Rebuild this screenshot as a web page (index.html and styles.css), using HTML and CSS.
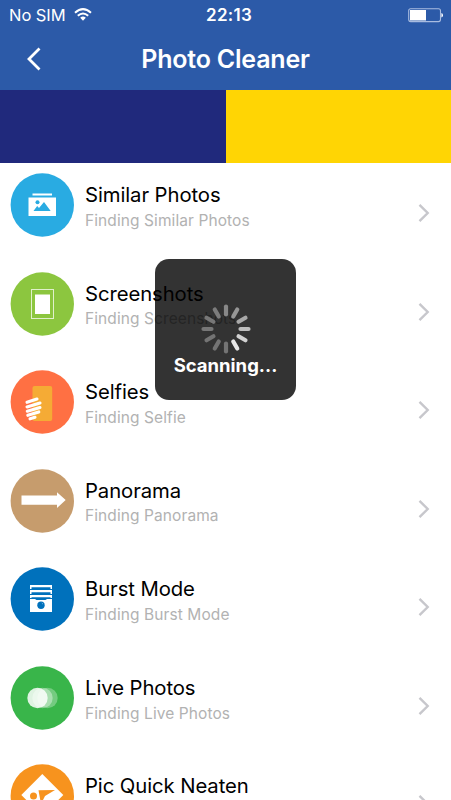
FILE: index.html
```html
<!DOCTYPE html>
<html lang="en">
<head>
<meta charset="utf-8">
<title>Photo Cleaner</title>
<link rel="stylesheet" href="styles.css">
</head>
<body>
<div class="screen">
  <header class="header">
    <div class="status">
      <div class="carrier"><span>No SIM</span>
        <svg class="wifi" width="18" height="14" viewBox="0 0 18 14" fill="none" stroke="#fff" stroke-width="2"><path d="M1 4.7Q9-2.5 17 4.7"/><path d="M3.8 7.8Q9 3.2 14.2 7.8"/><path d="M6.2 9.8Q9 7.4 11.8 9.8L9 12.8Z" fill="#fff" stroke="none"/></svg>
      </div>
      <span class="time">22:13</span>
      <svg class="battery" width="36" height="15" viewBox="0 0 36 15"><rect x=".7" y=".8" width="31.8" height="12.8" rx="2" fill="none" stroke="#a9bce0" stroke-width="1.1"/><path d="M2 2H18V12.5H2Z" fill="#fff"/><path d="M33.4 5Q35 5.2 35 7.2T33.4 9.5Z" fill="#fff"/></svg>
    </div>
    <div class="nav">
      <svg class="back" width="16" height="24" viewBox="0 0 16 24" fill="none" stroke="#fff" stroke-width="2.8"><path d="M13.5 1.5L3 12L13.5 22.5"/></svg>
      <h1>Photo Cleaner</h1>
    </div>
  </header>
  <div class="usage"><div class="used"></div><div class="free"></div></div>
  <main class="list">
    <div class="row">
      <svg class="icon" viewBox="0 0 64 64"><circle cx="32.3" cy="32" r="31.7" fill="#29abe2"/><path fill="#fff" d="M22.5 20.5H42V22.5H22.5ZM18.5 24.5H46V43H18.5Z"/><circle cx="27.5" cy="29.3" r="2" fill="#29abe2"/><path d="M23.5 38L27.2 33L29 35L34 29L40.7 38Z" fill="#29abe2"/></svg>
      <div class="text"><h2>Similar Photos</h2><p>Finding Similar Photos</p></div>
      <svg class="chevron" viewBox="0 0 12 20"><path d="M1.5 1.8L9.7 10L1.5 18.2"/></svg>
    </div>
    <div class="row">
      <svg class="icon" viewBox="0 0 64 64"><circle cx="32.3" cy="32" r="31.7" fill="#8cc63f"/><rect x="21.5" y="17.5" width="22" height="29" fill="none" stroke="#e0f0cb" stroke-width="1"/><path d="M25 22.5H40V42H25Z" fill="#fff"/></svg>
      <div class="text"><h2>Screenshots</h2><p>Finding Screenshots</p></div>
      <svg class="chevron" viewBox="0 0 12 20"><path d="M1.5 1.8L9.7 10L1.5 18.2"/></svg>
    </div>
    <div class="row">
      <svg class="icon" viewBox="0 0 64 64"><circle cx="32.3" cy="32" r="31.7" fill="#ff7043"/><rect x="22.5" y="16" width="19.7" height="35" rx="2" fill="#f5ab35"/><g stroke="#fff" stroke-width="3.1" stroke-linecap="round"><path d="M17 32.3L27 29M17 36.9L30 33M17.3 41.2L30 37.5M17.8 45.3L28.8 41.9M20 48.8L25 47.3"/></g></svg>
      <div class="text"><h2>Selfies</h2><p>Finding Selfie</p></div>
      <svg class="chevron" viewBox="0 0 12 20"><path d="M1.5 1.8L9.7 10L1.5 18.2"/></svg>
    </div>
    <div class="row">
      <svg class="icon" viewBox="0 0 64 64"><circle cx="32.3" cy="32" r="31.7" fill="#c69c6d"/><path d="M11.5 26.4H47V23.3L55.7 31L47 39V35.8H11.5Z" fill="#fff"/></svg>
      <div class="text"><h2>Panorama</h2><p>Finding Panorama</p></div>
      <svg class="chevron" viewBox="0 0 12 20"><path d="M1.5 1.8L9.7 10L1.5 18.2"/></svg>
    </div>
    <div class="row">
      <svg class="icon" viewBox="0 0 64 64"><circle cx="32.3" cy="32" r="31.7" fill="#0071bc"/><path d="M20 18H42V22H40.5V20.2H21.5V22H20ZM20 23H42V27H40.5V25.2H21.5V27H20ZM20 28H42V31H40.5V30.2H21.5V31H20ZM20 32H25L26.5 33H35.5L37 32H42V45H20Z" fill="#fff"/><circle cx="31" cy="38.2" r="3.7" fill="#0071bc"/><path d="M31.8 36L33 37.2" stroke="#78b3dc"/></svg>
      <div class="text"><h2>Burst Mode</h2><p>Finding Burst Mode</p></div>
      <svg class="chevron" viewBox="0 0 12 20"><path d="M1.5 1.8L9.7 10L1.5 18.2"/></svg>
    </div>
    <div class="row">
      <svg class="icon" viewBox="0 0 64 64"><circle cx="32.3" cy="32" r="31.7" fill="#39b54a"/><g fill="#fff"><circle cx="37.5" cy="32" r="10.2" opacity=".3"/><circle cx="32.5" cy="32" r="10.2" opacity=".38"/><circle cx="27.5" cy="32" r="10.2" opacity=".84"/></g></svg>
      <div class="text"><h2>Live Photos</h2><p>Finding Live Photos</p></div>
      <svg class="chevron" viewBox="0 0 12 20"><path d="M1.5 1.8L9.7 10L1.5 18.2"/></svg>
    </div>
    <div class="row">
      <svg class="icon" viewBox="0 0 64 64"><circle cx="32.3" cy="32" r="31.7" fill="#f7931e"/><path d="M32.3 10L53.3 31L32.3 52L11.3 31Z" fill="#fff"/><circle cx="23.5" cy="32" r="3.5" fill="#f7931e"/><path d="M28.5 26.2L45 26L35 32L31 40Z" fill="#f7931e"/></svg>
      <div class="text"><h2>Pic Quick Neaten</h2></div>
      <svg class="chevron" viewBox="0 0 12 20"><path d="M1.5 1.8L9.7 10L1.5 18.2"/></svg>
    </div>
  </main>
  <div class="hud">
    <svg class="spinner" width="52" height="52" viewBox="-26 -26 52 52" stroke-width="4.2" stroke-linecap="round">
      <path d="M0-14.5V-22.5" stroke="#888"/>
      <path d="M0-14.5V-22.5" stroke="#969696" transform="rotate(30)"/>
      <path d="M0-14.5V-22.5" stroke="#a8a8a8" transform="rotate(60)"/>
      <path d="M0-14.5V-22.5" stroke="#bdbdbd" transform="rotate(90)"/>
      <path d="M0-14.5V-22.5" stroke="#d2d2d2" transform="rotate(120)"/>
      <path d="M0-14.5V-22.5" stroke="#e8e8e8" transform="rotate(150)"/>
      <path d="M0-14.5V-22.5" stroke="#747474" transform="rotate(180)"/>
      <path d="M0-14.5V-22.5" stroke="#747474" transform="rotate(210)"/>
      <path d="M0-14.5V-22.5" stroke="#747474" transform="rotate(240)"/>
      <path d="M0-14.5V-22.5" stroke="#777" transform="rotate(270)"/>
      <path d="M0-14.5V-22.5" stroke="#777" transform="rotate(300)"/>
      <path d="M0-14.5V-22.5" stroke="#7c7c7c" transform="rotate(330)"/>
    </svg>
    <span>Scanning...</span>
  </div>
</div>
</body>
</html>
```
FILE: styles.css
```css
* { box-sizing: border-box; }
body { margin: 0; font-family: Inter, "Liberation Sans", sans-serif; background: #fff; }
h1, h2, p { margin: 0; font-weight: 400; white-space: nowrap; }
.screen { position: relative; height: 800px; overflow: hidden; display: flex; flex-direction: column; }
.header { flex: none; height: 90px; background: #2c5aa8; color: #fff; }
.status { display: grid; grid-template-columns: 197px 1fr 36px; align-items: center; height: 30px; padding: 0 7px 0 9px; }
.carrier { display: flex; align-items: center; gap: 8px; font-size: 16.5px; letter-spacing: -0.05px; }
.time { font-size: 17px; font-weight: 600; letter-spacing: 0.3px; }
.nav { display: grid; grid-template-columns: 60px 1fr 60px; align-items: center; height: 58px; }
.back { margin-left: 26px; }
.nav h1 { text-align: center; font-size: 25px; font-weight: 600; letter-spacing: -0.2px; }
.usage { flex: none; display: grid; grid-template-columns: 1fr 1fr; height: 73px; }
.used { background: #20297c; }
.free { background: #ffd504; }
.list { flex: none; }
.row { display: flex; align-items: flex-start; height: 98.56px; padding: 10px 21px 0 10px; }
.icon { flex: none; width: 64px; height: 64px; }
.text { flex: 1; margin: 8px 0 0 11px; }
.text h2 { font-size: 20.3px; line-height: 27.8px; color: #000; letter-spacing: -0.08px; }
.text p { font-size: 15.5px; line-height: 24px; color: #b2b2b2; letter-spacing: 0.09px; }
.chevron { width: 12px; height: 20px; margin-top: 30px; fill: none; stroke: #c7c7cc; stroke-width: 2.4; }
.hud { position: absolute; left: 155px; top: 259px; width: 141px; height: 141px; border-radius: 14px; background: rgba(0, 0, 0, .8); color: #fff; display: flex; flex-direction: column; align-items: center; padding-top: 44px; }
.hud span { font-size: 18.5px; line-height: 20px; font-weight: 700; }
```
